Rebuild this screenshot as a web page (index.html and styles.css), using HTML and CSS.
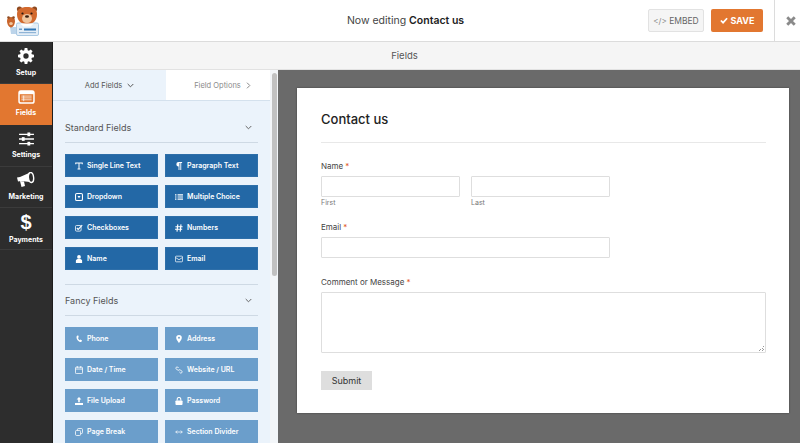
FILE: index.html
```html
<!DOCTYPE html>
<html lang="en">
<head>
    <meta charset="UTF-8">
    <meta name="viewport" content="width=device-width, initial-scale=1.0">
    <title>Now editing Contact us</title>
    <link rel="stylesheet" href="styles.css">
</head>
<body>
    <header class="topbar">
        <div class="logo">
            <svg width="34" height="32" viewBox="0 0 34 32">
                <path d="M4 22h6v7H5z" fill="#bcd4ea"/>
                <rect x="10.500" y="18" width="22" height="12.500" rx="1.500" fill="#e4eef7" stroke="#a9c8e2"/>
                <rect x="13" y="23.500" width="3" height="1.500" fill="#6d9cc7"/>
                <rect x="18" y="23.500" width="12" height="2" fill="#2f75b5"/>
                <rect x="13" y="27" width="17" height="1.200" fill="#8fb4d6"/>
                <circle cx="13.500" cy="4" r="2.600" fill="#8f4a20"/>
                <circle cx="28.500" cy="4" r="2.600" fill="#8f4a20"/>
                <path d="M11 9c0-5 4-7 10-7s10 2 10 7c0 6-3 10-10 10s-10-4-10-10z" fill="#d2692e"/>
                <ellipse cx="21" cy="13.500" rx="5" ry="4.500" fill="#f0c59d"/>
                <circle cx="16.500" cy="8.500" r="1.100" fill="#2d1a10"/>
                <circle cx="25.500" cy="8.500" r="1.100" fill="#2d1a10"/>
                <ellipse cx="21" cy="11.500" rx="2" ry="1.300" fill="#3a2012"/>
                <path d="M14 18.500h14l-3.500 3h-7z" fill="#fff"/>
                <path d="M5 12c2.500 0 4 1.500 4 4s-1.500 6.500-4 6.500S1 18.500 1 16s1.500-4 4-4z" fill="#c9652c"/>
                <circle cx="2.500" cy="12.500" r="1.300" fill="#8f4a20"/>
                <circle cx="7.500" cy="12.500" r="1.300" fill="#8f4a20"/>
                <ellipse cx="5" cy="18.500" rx="1.800" ry="1.600" fill="#f0c59d"/>
            </svg>
        </div>
        <div class="topbar-title">Now editing <strong>Contact us</strong></div>
        <div class="topbar-actions">
            <button class="btn-embed"><span class="code-mark">&lt;/&gt;</span> EMBED</button>
            <button class="btn-save">
                <svg width="8" height="7" viewBox="0 0 10 9"><path d="M1 4.500l2.800 2.800L9 1.600" fill="none" stroke="#fff" stroke-width="2.200"/></svg>
                SAVE
            </button>
        </div>
        <div class="topbar-close">
            <svg width="10" height="10" viewBox="0 0 12 12"><path d="M1.500 1.500l9 9M10.500 1.500l-9 9" stroke="#8a8a8a" stroke-width="3.400"/></svg>
        </div>
    </header>

    <div class="main">
        <nav class="sidebar">
            <div class="side-item">
                <svg width="16" height="16" viewBox="0 0 18 18"><path fill="#fff" fill-rule="evenodd" d="M7.500 0h3l.4 2.400 1.400.6 2-1.400 2.100 2.100-1.400 2 .6 1.400 2.400.4v3l-2.400.4-.6 1.400 1.400 2-2.100 2.100-2-1.400-1.400.6-.4 2.400h-3l-.4-2.400-1.400-.6-2 1.400-2.100-2.100 1.400-2-.6-1.400L0 10.500v-3l2.400-.4.6-1.400-1.400-2L3.700 1.600l2 1.400 1.400-.6zM9 6a3 3 0 100 6 3 3 0 000-6z"/></svg>
                <span>Setup</span>
            </div>
            <div class="side-item active">
                <svg width="17" height="14" viewBox="0 0 18 15"><rect x="1" y="1" width="16" height="13" rx="2" fill="none" stroke="#fff" stroke-width="1.600"/><rect x="1" y="1" width="16" height="3.500" fill="#fff"/><path d="M3.500 6.500h11M3.500 8.500h11M3.500 10.500h11M6 6v6" stroke="#fff" stroke-width=".8"/></svg>
                <span>Fields</span>
            </div>
            <div class="side-item">
                <svg width="15" height="14" viewBox="0 0 16 15"><path d="M0 2.500h16M0 7.500h16M0 12.500h16" stroke="#fff" stroke-width="1.500"/><rect x="9" y=".5" width="3" height="4" fill="#fff"/><rect x="3" y="5.500" width="3" height="4" fill="#fff"/><rect x="9" y="10.500" width="3" height="4" fill="#fff"/></svg>
                <span>Settings</span>
            </div>
            <div class="side-item">
                <svg width="18" height="16" viewBox="0 0 18 16"><path fill="#fff" d="M0 5.500L3 5l9-4 1 9-9-1-3 .4z"/><path fill="#fff" d="M3 9l4 .5 1 4.500-3.500 1z"/><ellipse cx="14" cy="5.500" rx="2.600" ry="5" fill="#2d2d2d" stroke="#fff" stroke-width="1.400" transform="rotate(-6 14 5.500)"/></svg>
                <span>Marketing</span>
            </div>
            <div class="side-item">
                <span class="dollar">$</span>
                <span>Payments</span>
            </div>
        </nav>

        <div class="workspace">
            <div class="fields-bar">Fields</div>
            <div class="workspace-body">
                <aside class="panel">
                    <div class="panel-inner">
                        <div class="tabs">
                            <div class="tab tab-on">Add Fields
                                <svg width="7" height="5" viewBox="0 0 7 5"><path d="M.7 1l2.800 2.800L6.300 1" fill="none" stroke="#555" stroke-width="1"/></svg>
                            </div>
                            <div class="tab tab-off">Field Options
                                <svg width="5" height="7" viewBox="0 0 5 7"><path d="M1 .7l2.800 2.800L1 6.300" fill="none" stroke="#888" stroke-width="1"/></svg>
                            </div>
                        </div>
                        <div class="group-head">Standard Fields
                            <svg width="7" height="5" viewBox="0 0 7 5"><path d="M.7 1l2.800 2.800L6.300 1" fill="none" stroke="#666" stroke-width="1"/></svg>
                        </div>
                        <div class="field-grid standard">
                            <div class="field-btn"><svg viewBox="0 0 11 10"><path d="M1 2.500V1h9v1.500M5.500 1v8M3.500 9h4" fill="none" stroke="#fff" stroke-width="1.400"/></svg>Single Line Text</div>
                            <div class="field-btn"><svg viewBox="0 0 7 9"><path fill="#fff" d="M3 0h4v1H6v8H5V1H4v8H3V5a2.500 2.500 0 010-5z"/></svg>Paragraph Text</div>
                            <div class="field-btn"><svg viewBox="0 0 9 9"><rect x=".6" y=".6" width="7.800" height="7.800" rx="1.500" fill="none" stroke="#fff" stroke-width="1.200"/><path d="M2.800 3.500h3.400L4.500 6z" fill="#fff"/></svg>Dropdown</div>
                            <div class="field-btn"><svg viewBox="0 0 11 9"><path d="M0 1.500h2M0 4.500h2M0 7.500h2M3.500 1.500H11M3.500 4.500H11M3.500 7.500H11" stroke="#fff" stroke-width="1.600"/></svg>Multiple Choice</div>
                            <div class="field-btn"><svg viewBox="0 0 10 9"><rect x=".6" y="1.400" width="7" height="7" rx="1.300" fill="none" stroke="#fff" stroke-width="1"/><path d="M2.300 4.500l1.700 1.700L9 1" fill="none" stroke="#fff" stroke-width="1.400"/></svg>Checkboxes</div>
                            <div class="field-btn"><svg viewBox="0 0 10 9"><path d="M3.500 0L2.500 9M7.500 0l-1 9M.5 3h9M0 6h9" stroke="#fff" stroke-width="1.400"/></svg>Numbers</div>
                            <div class="field-btn"><svg viewBox="0 0 7 9"><circle cx="3.500" cy="2.200" r="2.100" fill="#fff"/><path d="M0 9V6.500C0 5 1.200 4.500 3.500 4.500S7 5 7 6.500V9z" fill="#fff"/></svg>Name</div>
                            <div class="field-btn"><svg viewBox="0 0 11 9"><rect x=".6" y=".6" width="9.800" height="7.800" rx="1.200" fill="none" stroke="#fff" stroke-width="1"/><path d="M.8 2.500l4.700 3 4.700-3" fill="none" stroke="#fff" stroke-width="1"/></svg>Email</div>
                        </div>
                        <div class="group-head group-head-next">Fancy Fields
                            <svg width="7" height="5" viewBox="0 0 7 5"><path d="M.7 1l2.800 2.800L6.300 1" fill="none" stroke="#666" stroke-width="1"/></svg>
                        </div>
                        <div class="field-grid fancy">
                            <div class="field-btn"><svg viewBox="0 0 8 9"><path d="M1.500 1c-1.200 3 1.500 6.500 5 7l1-1.800L5.500 5l-1 .8C3.500 5 3 4.200 2.800 3.200l1-.7L3 .3z" fill="#fff"/></svg>Phone</div>
                            <div class="field-btn"><svg viewBox="0 0 7 10"><path fill="#fff" fill-rule="evenodd" d="M3.500 0A3.500 3.500 0 017 3.500C7 6 3.500 10 3.500 10S0 6 0 3.500A3.500 3.500 0 013.500 0zm0 2.300a1.200 1.200 0 100 2.400 1.200 1.200 0 000-2.400z"/></svg>Address</div>
                            <div class="field-btn"><svg viewBox="0 0 10 10"><rect x=".6" y="1.500" width="8.800" height="8" rx="1" fill="none" stroke="#fff" stroke-width="1"/><path d="M.6 3.800h8.800M2.800 0v2.500M7.200 0v2.500" stroke="#fff" stroke-width="1"/></svg>Date / Time</div>
                            <div class="field-btn"><svg viewBox="0 0 10 10"><path d="M4.500 2.500L3.300 1.300a1.500 1.500 0 00-2 2L3 5a1.500 1.500 0 002 0M5.500 7.500l1.200 1.200a1.500 1.500 0 002-2L7 5a1.500 1.500 0 00-2 0" fill="none" stroke="#fff" stroke-width="1.100"/></svg>Website / URL</div>
                            <div class="field-btn"><svg viewBox="0 0 10 10"><path fill="#fff" d="M5 0l3 3H6v3.500H4V3H2zM0 7.500h10V10H0z"/></svg>File Upload</div>
                            <div class="field-btn"><svg viewBox="0 0 8 9"><path d="M2 4V2.500a2 2 0 014 0V4" fill="none" stroke="#fff" stroke-width="1.200"/><rect y="3.800" width="8" height="5.200" rx="1" fill="#fff"/></svg>Password</div>
                            <div class="field-btn"><svg viewBox="0 0 10 10"><rect x="3" y=".6" width="6.400" height="6.400" rx="1.500" fill="none" stroke="#fff" stroke-width="1"/><rect x=".6" y="3" width="6.400" height="6.400" rx="1.500" fill="#6b9ecb" stroke="#fff" stroke-width="1"/></svg>Page Break</div>
                            <div class="field-btn"><svg viewBox="0 0 11 6"><path d="M1 3h9M3 1L1 3l2 2M8 1l2 2-2 2" fill="none" stroke="#fff" stroke-width="1"/></svg>Section Divider</div>
                        </div>
                    </div>
                    <div class="scrollbar"><div class="scroll-thumb"></div></div>
                </aside>

                <section class="preview">
                    <form class="form-card">
                        <h2 class="form-title">Contact us</h2>
                        <div class="form-row">
                            <label class="form-label">Name<i>*</i></label>
                            <div class="name-cols">
                                <div class="name-col"><div class="input"></div><small>First</small></div>
                                <div class="name-col"><div class="input"></div><small>Last</small></div>
                            </div>
                        </div>
                        <div class="form-row form-row-email">
                            <label class="form-label">Email<i>*</i></label>
                            <div class="input input-wide"></div>
                        </div>
                        <div class="form-row">
                            <label class="form-label">Comment or Message<i>*</i></label>
                            <div class="input textarea"></div>
                        </div>
                        <div class="btn-submit">Submit</div>
                    </form>
                </section>
            </div>
        </div>
    </div>
</body>
</html>
```

FILE: styles.css
```css
* {
    box-sizing: border-box;
}

html, body {
    height: 100%;
}

body {
    margin: 0;
    overflow: hidden;
    font-family: Inter, "Liberation Sans", sans-serif;
    color: #444;
    background: #fff;
}

/* top bar */
.topbar {
    display: flex;
    align-items: center;
    height: 42px;
    border-bottom: 1px solid #dcdcdc;
    background: #fff;
}

.logo {
    width: 53px;
    height: 41px;
    padding: 5px 0 0 6px;
}

.topbar-title {
    flex: 1;
    padding-left: 110px;
    text-align: center;
    font-size: 10.500px;
    color: #444;
}

.topbar-title strong {
    font-weight: 600;
    color: #222;
}

.topbar-actions {
    display: flex;
    gap: 7px;
    padding-right: 11px;
}

.topbar-actions button {
    height: 23px;
    border-radius: 2px;
    font-family: inherit;
}

.btn-embed {
    width: 56px;
    padding: 0;
    border: 1px solid #e2e2e2;
    background: #f5f5f5;
    color: #666;
    font-size: 8.500px;
}

.code-mark {
    font-size: 8px;
    color: #888;
}

.btn-save {
    display: flex;
    align-items: center;
    justify-content: center;
    gap: 3px;
    width: 52px;
    padding: 0;
    border: 0;
    background: #e27730;
    color: #fff;
    font-size: 9px;
    font-weight: 700;
}

.topbar-close {
    display: flex;
    align-items: center;
    justify-content: center;
    width: 26px;
    height: 41px;
    border-left: 1px solid #dcdcdc;
    padding-left: 7px;
}

.main {
    display: flex;
    height: 401px;
}

/* sidebar */
.sidebar {
    width: 53px;
    flex: none;
    background: #2d2d2d;
    border-right: 1px solid #1d1d1d;
}

.side-item {
    display: flex;
    flex-direction: column;
    align-items: center;
    justify-content: center;
    gap: 4px;
    height: 41.500px;
    border-bottom: 1px solid #3b3b3b;
    color: #fff;
    font-size: 7px;
    font-weight: 700;
}

.side-item svg {
    flex: none;
}

.side-item.active {
    background: #e27730;
    border-bottom-color: #e27730;
}

.dollar {
    height: 18px;
    font-family: "Liberation Sans", sans-serif;
    font-size: 20px;
    line-height: 18px;
}

.workspace {
    flex: 1;
    display: flex;
    flex-direction: column;
    min-width: 0;
}

.fields-bar {
    height: 28px;
    flex: none;
    padding-right: 44px;
    border-bottom: 1px solid #e2e2e2;
    background: #f5f5f5;
    text-align: center;
    font-size: 9.500px;
    line-height: 27px;
    color: #555;
}

.workspace-body {
    flex: 1;
    display: flex;
    min-height: 0;
}

/* left panel */
.panel {
    display: flex;
    width: 225px;
    flex: none;
    overflow: hidden;
    background: #ebf3fb;
}

.panel-inner {
    width: 217px;
    flex: none;
}

.tabs {
    display: flex;
    height: 31px;
    border-bottom: 1px solid #d4e1ed;
}

.tab {
    display: flex;
    align-items: center;
    justify-content: center;
    gap: 5px;
    font-size: 7.500px;
}

.tab-on {
    width: 113px;
    color: #555;
}

.tab-off {
    width: 104px;
    padding-left: 9px;
    background: #fff;
    color: #8a8a8a;
}

.group-head {
    display: flex;
    align-items: center;
    justify-content: space-between;
    height: 42px;
    margin: 0 12px;
    padding: 12px 6px 0 0;
    border-bottom: 1px solid #ced9e4;
    font-size: 9px;
    color: #555;
}

.group-head-next {
    height: 31px;
    padding-top: 0;
}

.field-grid {
    display: grid;
    grid-template-columns: 93px 93px;
    gap: 8px 7px;
    padding: 11px 12px 14px;
}

.standard {
    padding-bottom: 0;
}

.standard::after {
    content: "";
    grid-column: 1 / 3;
    height: 1px;
    margin-top: 6px;
    background: #ced9e4;
}

.field-btn {
    display: flex;
    align-items: center;
    gap: 4px;
    height: 23px;
    padding-left: 9px;
    border: 1px solid #2e6fa9;
    background: #2368a6;
    color: #fff;
    font-size: 7px;
    font-weight: 600;
}

.field-btn svg {
    flex: none;
    width: 8px;
    height: 8px;
}

.fancy .field-btn {
    border-color: #6b9ecb;
    background: #6b9ecb;
}

.scrollbar {
    width: 8px;
    flex: none;
    padding: 3px 1px 0 2px;
    background: #f3f6f9;
}

.scroll-thumb {
    height: 203px;
    border-radius: 3px;
    background: #c1c1c1;
}

/* form preview */
.preview {
    flex: 1;
    padding: 18px 34px 0 19px;
    background: #6a6a6a;
}

.form-card {
    height: 325px;
    padding: 23px 23px 0 24px;
    background: #fff;
    box-shadow: 0 0 2px rgba(0, 0, 0, 0.4);
}

.form-title {
    height: 32px;
    margin: 0 0 18px;
    border-bottom: 1px solid #e8e8e8;
    font-size: 13px;
    font-weight: 500;
    line-height: 16px;
    color: #222;
}

.form-row {
    margin-bottom: 15px;
}

.form-row-email {
    margin-bottom: 19px;
}

.form-label {
    display: block;
    margin-bottom: 5px;
    font-size: 8px;
    line-height: 10px;
    color: #444;
}

.form-label i {
    margin-left: 2px;
    font-style: normal;
    color: #e2571e;
}

.name-cols {
    display: flex;
    gap: 11px;
}

.name-col {
    width: 139px;
}

.name-col small {
    display: block;
    margin-top: 1px;
    font-size: 7px;
    line-height: 9px;
    color: #777;
}

.input {
    height: 21px;
    border: 1px solid #dedede;
    border-radius: 1px;
    background: #fff;
}

.input-wide {
    width: 289px;
}

.textarea {
    position: relative;
    width: 445px;
    height: 61px;
}

.textarea::after {
    content: "";
    position: absolute;
    right: 1px;
    bottom: 1px;
    width: 5px;
    height: 5px;
    background: linear-gradient(135deg, transparent 50%, #999 50%, #999 60%, transparent 60%, transparent 75%, #999 75%, #999 85%, transparent 85%);
}

.btn-submit {
    width: 51px;
    height: 19px;
    margin-top: 18px;
    background: #dedede;
    text-align: center;
    font-size: 9px;
    line-height: 19px;
    color: #333;
}
```
